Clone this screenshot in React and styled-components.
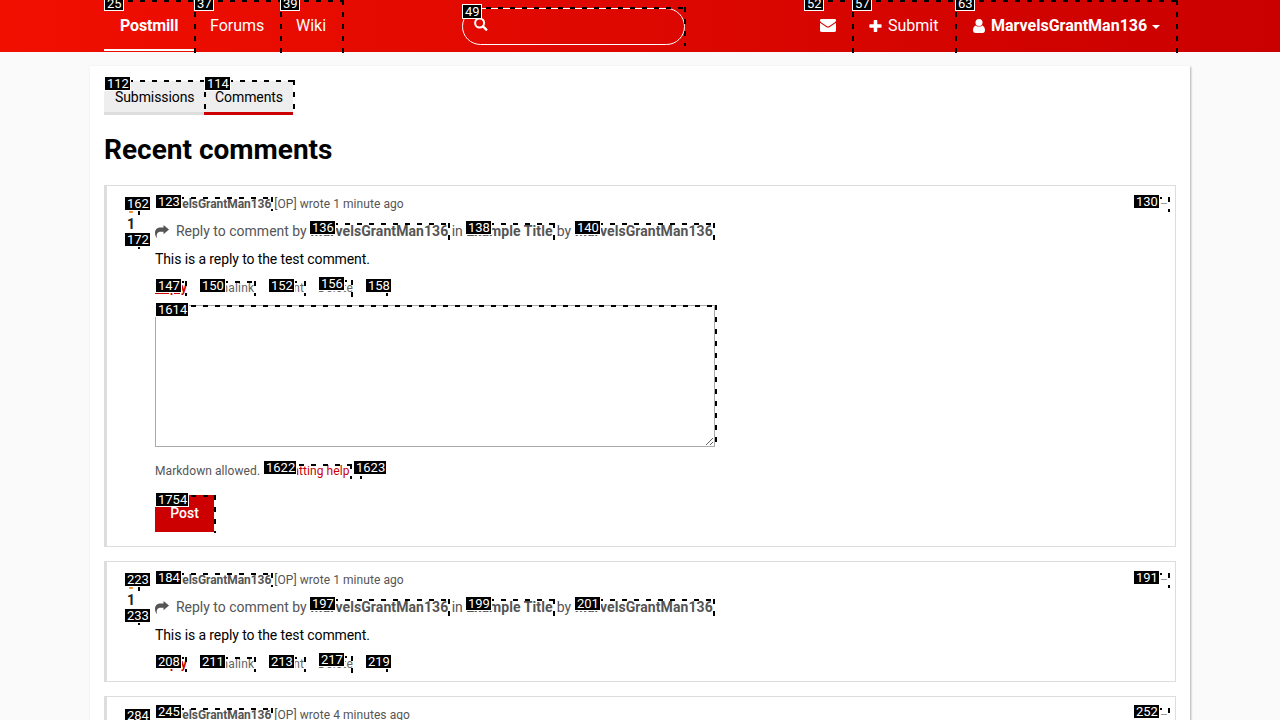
import React from "react";
import styled, { createGlobalStyle, css } from "styled-components";

const Global = createGlobalStyle`
  *, *::before, *::after { box-sizing: border-box; }
  html { overflow: hidden; }
  body { margin: 0; height: 720px; overflow: hidden; background: #fafafa; color: #000;
    font: 14px/21px Roboto, sans-serif; }
`;
const Page = styled.div`position: relative; height: 720px; overflow: hidden;`;
const Nav = styled.nav`height: 52px; background: linear-gradient(to right, #f10f00, #c90000);`;
const NavInner = styled.div`display: flex; align-items: stretch; width: 1072px; height: 52px; margin: 0 auto;`;
const NavLink = styled.a`
  display: flex; align-items: center; height: 51px; padding: 0 0 0 ${(p) => p.$pad ?? 16}px; gap: ${(p) => p.$gap ?? 5}px;
  color: #fff; font-size: 16px; white-space: nowrap; width: ${(p) => p.$w}px;
  font-weight: ${(p) => (p.$bold ? 700 : 400)};
  ${(p) => p.$active && css`border-bottom: 2px solid #fff; padding-top: 2px; letter-spacing: -.15px;`}
`;
const Search = styled.div`
  width: 223px; height: 37px; margin: 8px 0 0 119px; border: 1px solid #fff; border-radius: 19px; padding: 8px 11px; color: #fff;
`;
const Right = styled.div`display: flex; margin-left: auto;`;
const Glyph = styled.svg`display: block; flex: none; fill: currentColor; overflow: visible;`;
const Caret = styled.span`border: 4px solid transparent; border-top-color: #fff; border-bottom: 0; margin: 3px 0 0 -1px;`;
const Main = styled.main`
  width: 1100px; height: 700px; margin: 14px auto 0; padding: 15px 14px; background: #fff; box-shadow: 1px 1px 2px rgba(0,0,0,.3);
`;
const Tabs = styled.div`display: flex; height: 34px; letter-spacing: -.08px;`;
const Tab = styled.a`
  width: ${(p) => p.$w}px; padding: 6px 0 0 11px; background: #eee; border-bottom: 3px solid ${(p) => (p.$active ? "#c00" : "#ddd")};
`;
const Title = styled.h1`margin: 14px 0; font-size: 28px; line-height: 42px; font-weight: 700;`;
const Comment = styled.article`
  display: flex; height: ${(p) => p.$h}px; margin-bottom: 14px; border: 1px solid #ddd; border-left-width: 3px;
`;
const Votes = styled.div`
  width: 48px; padding: 25px 0 0 20px; font-weight: 700; line-height: 27px; flex: none; color: #222;
`;
const Arrow = styled.div`height: 2px; width: 4px; margin: 0 0 -2px 2px; background: #f09030; border-radius: 0 0 1px 1px;`;
const Body = styled.div`flex: 1; padding-top: 8px;`;
const Meta = styled.div`
  display: flex; font-size: 12px; line-height: 21px; color: #555; gap: 3px; padding-right: 7px;
  b { letter-spacing: -.05px; }
  span { letter-spacing: .06px; }
`;
const Collapse = styled.span`margin-left: auto; color: #999;`;
const Context = styled.div`display: flex; align-items: center; height: 21px; margin-top: 6px; color: #555; white-space: pre;`;
const Ref = styled.b`font-weight: 700; letter-spacing: .08px; width: ${(p) => p.$w}px;`;
const Text = styled.p`margin: 7px 0 0; line-height: 21px; letter-spacing: -.1px;`;
const Actions = styled.div`display: flex; gap: 14px; margin-top: 8px; font-size: 12px; line-height: 21px; color: #666; letter-spacing: .2px;`;
const Action = styled.a`
  width: ${(p) => p.$w}px; white-space: nowrap; 
  ${(p) => p.$red && css`color: #c00; font-weight: 700; letter-spacing: .4px;`}
  ${(p) => p.$line && css`text-decoration: underline;`}
`;
const TextBox = styled.textarea`
  display: block; width: 560px; height: 142px; margin: 6px 0 15px; border: 1px solid #aaa; background: #fff; resize: both;
`;
const Help = styled.div`font-size: 12px; line-height: 18px; letter-spacing: .08px; color: #555; display: flex; gap: 4px; a { color: #c00; }`;
const Post = styled.button`
  display: block; width: 59px; height: 37px; margin-top: 15px; padding: 0 0 2px; border: 0; background: #c00; color: #fff; font: 500 14px Roboto, sans-serif;
`;
const Mark = styled.div`
  position: absolute; left: ${(p) => p.$x}px; top: ${(p) => p.$y}px; width: ${(p) => p.$w}px; height: ${(p) => p.$h}px;
  pointer-events: none;
  background:
    repeating-linear-gradient(to right, #000 0 5px, transparent 5px 12px) 0 0 / 100% 2px no-repeat,
    repeating-linear-gradient(to bottom, #000 0 5px, transparent 5px 12px) 100% 0 / 2px 100% no-repeat;
`;
const Tag = styled.span`
  position: absolute; left: ${(p) => p.$x}px; top: ${(p) => p.$y}px; height: 15px; padding: 0 1px 0 2px; border: 1px solid #fff;
  background: #000; color: #fff; font: 13px/13px Roboto, sans-serif;
`;

const Mail = () => <Glyph width="16" height="13" viewBox="0 0 16 13"><path d="M1.3 0h13.4C15.4 0 16 .5 16 1.2c0 .9-.7 1.7-1.4 2.2L9.700 6.800c-.5.400-1.100.8-1.700.8s-1.200-.4-1.700-.8L1.400 3.400C.7 2.900 0 2.100 0 1.300 0 .600.500 0 1.300 0ZM0 3.700c.3.300.600.6 1 .8l4.500 3.100c.7.500 1.600 1.200 2.500 1.200s1.800-.7 2.500-1.200L15 4.500c.4-.2.700-.5 1-.8v7.900c0 .8-.6 1.400-1.400 1.400H1.400C.6 13 0 12.400 0 11.600Z" /></Glyph>;
const Plus = () => <Glyph width="13" height="12" viewBox="0 0 13 12"><path d="M5.500 0h2Q8.300 0 8.300.8v3.400h3.500q.8 0 .8.800v2q0 .8-.8.8H8.300v3.400q0 .8-.8.800h-2q-.8 0-.8-.8V7.800H1.100Q.3 7.800.3 7V5q0-.8.8-.8h3.600V.8q0-.8.8-.8Z" /></Glyph>;
const User = () => <Glyph width="12" height="14" viewBox="0 0 12 14"><path d="M2.700 6.400C1 6.900 0 8.900 0 11.300 0 12.800 1 14 2.300 14h7.400c1.300 0 2.300-1.200 2.300-2.700 0-2.400-1-4.400-2.700-4.900C8.400 7.200 7.300 7.600 6 7.600s-2.400-.4-3.300-1.200Z" /><circle cx="6" cy="3.500" r="3.500" /></Glyph>;
const Loupe = () => <Glyph width="14" height="14" viewBox="0 0 14 14"><circle cx="5.600" cy="6" r="4.500" fill="none" stroke="currentColor" strokeWidth="2" /><path d="m9 9.400 3.300 3.300" stroke="currentColor" strokeWidth="2.400" strokeLinecap="round" /></Glyph>;
const Share = () => <Glyph width="14" height="13" viewBox="0 0 14 13"><path d="M14 4.500 8.500 0v2.500H6C2.200 2.500 0 4.300 0 8c0 1.700.7 3.400 1.500 4.800.2.200.5.100.4-.2C1.200 8.400 2.800 6.700 6 6.700h2.500V9.200Z" /></Glyph>;

function Entry({ height, time, form }) {
  return (
    <Comment $h={height}>
      <Votes><Arrow />1</Votes>
      <Body>
        <Meta><b>MarvelsGrantMan136</b><span>[OP] wrote {time} ago</span><Collapse>–</Collapse></Meta>
        <Context><Share />{"  Reply to comment by "}<Ref $w={138}>MarvelsGrantMan136</Ref>{" in "}<Ref $w={87}>Example Title</Ref>{" by "}<Ref>MarvelsGrantMan136</Ref></Context>
        <Text>This is a reply to the test comment.</Text>
        <Actions>
          <Action $w={30} $red $line={form}>Reply</Action><Action $w={55}>Permalink</Action><Action $w={36}>Parent</Action><Action $w={33}>Delete</Action><Action $w={20}>IP</Action>
        </Actions>
        {form && <><TextBox /><Help>Markdown allowed. <a>Formatting help</a></Help><Post>Post</Post></>}
      </Body>
    </Comment>
  );
}

const entryMarks = (y, n) => [
  [n[0], 155, y + 12, 118, 14, 155, y + 9], [n[1], 1133, y + 12, 37, 15, 1133, y + 9],
  [n[2], 309, y + 38, 141, 18, 309, y + 35], [n[3], 465, y + 38, 90, 18, 465, y + 35], [n[4], 574, y + 38, 141, 18, 574, y + 35],
  [n[5], 155, y + 96, 32, 15, 155, y + 93], [n[6], 199, y + 96, 57, 15, 199, y + 93], [n[7], 268, y + 96, 38, 15, 268, y + 93],
  [n[8], 318, y + 95, 35, 17, 318, y + 91], [n[9], 365, y + 96, 23, 15, 365, y + 93],
  [n[10], 125, y + 14, 15, 16, 124, y + 11], [n[11], 125, y + 50, 15, 14, 124, y + 47],
];
const marks = [
  [25, 104, 0, 92, 53, 104, -4], [37, 194, 0, 88, 53, 194, -4], [39, 280, 0, 64, 53, 280, -4],
  [49, 462, 7, 224, 39, 462, 4], [52, 804, 0, 50, 53, 804, -4], [57, 852, 0, 105, 53, 852, -4], [63, 955, 0, 223, 53, 955, -4],
  [112, 104, 80, 102, 35, 104, 76], [114, 204, 80, 91, 35, 204, 76],
  ...entryMarks(185, [123, 130, 136, 138, 140, 147, 150, 152, 156, 158, 162, 172]),
  [1614, 155, 305, 562, 142, 155, 302], [1622, 263, 464, 89, 15, 263, 460], [1623, 353, 464, 9, 15, 353, 460], [1754, 155, 495, 61, 38, 155, 492],
  ...entryMarks(561, [184, 191, 197, 199, 201, 208, 211, 213, 217, 219, 223, 233]),
  [245, 155, 708, 118, 14, 155, 704], [252, 1133, 708, 37, 15, 1133, 704], [284, 125, 710, 15, 16, 124, 708],
];

export default function App() {
  return (
    <Page>
      <Global />
      <Nav><NavInner>
        <NavLink $w={90} $bold $active>Postmill</NavLink><NavLink $w={86}>Forums</NavLink><NavLink $w={63}>Wiki</NavLink>
        <Search><Loupe /></Search>
        <Right><NavLink $w={48}><Mail /></NavLink><NavLink $w={103} $pad={17} $gap={6}><Plus />Submit</NavLink><NavLink $w={221} $bold $pad={18} $gap={6}><User />MarvelsGrantMan136<Caret /></NavLink></Right>
      </NavInner></Nav>
      <Main>
        <Tabs><Tab $w={100}>Submissions</Tab><Tab $w={89} $active>Comments</Tab></Tabs>
        <Title>Recent comments</Title>
        <Entry height={362} time="1 minute" form />
        <Entry height={121} time="1 minute" />
        <Entry height={121} time="4 minutes" />
      </Main>
      {marks.map(([id, x, y, w, h]) => <Mark key={`m${id}`} $x={x} $y={y} $w={w} $h={h} />)}
      {marks.map(([id, , , , , x, y]) => <Tag key={`t${id}`} $x={x} $y={y}>{id}</Tag>)}
    </Page>
  );
}
